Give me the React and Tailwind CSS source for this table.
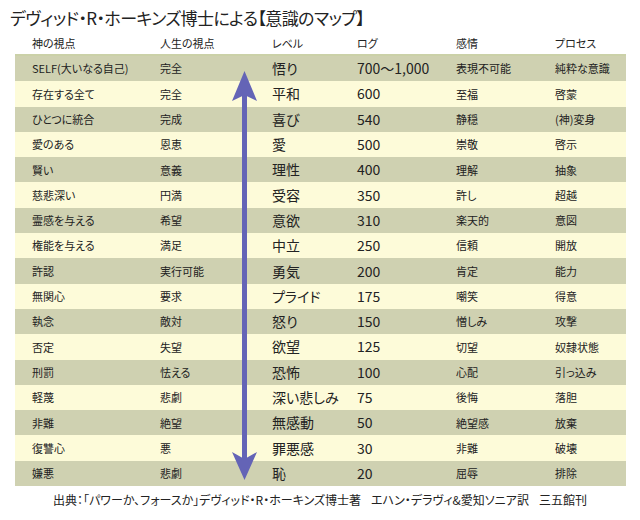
const rows = [
  ["SELF(大いなる自己)", "完全", "悟り", "700〜1,000", "表現不可能", "純粋な意識"],
  ["存在する全て", "完全", "平和", "600", "至福", "啓蒙"],
  ["ひとつに統合", "完成", "喜び", "540", "静穏", "(神)変身"],
  ["愛のある", "恩恵", "愛", "500", "崇敬", "啓示"],
  ["賢い", "意義", "理性", "400", "理解", "抽象"],
  ["慈悲深い", "円満", "受容", "350", "許し", "超越"],
  ["霊感を与える", "希望", "意欲", "310", "楽天的", "意図"],
  ["権能を与える", "満足", "中立", "250", "信頼", "開放"],
  ["許認", "実行可能", "勇気", "200", "肯定", "能力"],
  ["無関心", "要求", "プライド", "175", "嘲笑", "得意"],
  ["執念", "敵対", "怒り", "150", "憎しみ", "攻撃"],
  ["否定", "失望", "欲望", "125", "切望", "奴隷状態"],
  ["刑罰", "怯える", "恐怖", "100", "心配", "引っ込み"],
  ["軽蔑", "悲劇", "深い悲しみ", "75", "後悔", "落胆"],
  ["非難", "絶望", "無感動", "50", "絶望感", "放棄"],
  ["復讐心", "悪", "罪悪感", "30", "非難", "破壊"],
  ["嫌悪", "悲劇", "恥", "20", "屈辱", "排除"],
];

const cols = "grid grid-cols-[128px_112px_85px_99px_99px_1fr] pl-[17px]";

export default function App() {
  return (
    <div
      className="w-[640px] h-[520px] bg-white text-[#222] overflow-hidden [font-feature-settings:'palt']"
      style={{ fontFamily: '"Noto Sans CJK JP", "Noto Sans", sans-serif' }}
    >
      <h1 className="pl-[10px] pt-[6px] text-[17px] leading-[24px] tracking-[-0.6px] whitespace-nowrap">
        デヴィッド・R・ホーキンズ博士による【意識のマップ】
      </h1>

      <div className="relative ml-[15px] w-[611px] mt-[2px]">
        {/* header */}
        <div className={`${cols} h-[24px] items-center text-[11px] border-b-2 border-[#cbd1a8]`}>
          <span>神の視点</span>
          <span>人生の視点</span>
          <span>レベル</span>
          <span>ログ</span>
          <span>感情</span>
          <span>プロセス</span>
        </div>

        {rows.map((r, i) => (
          <div
            key={i}
            className={`${cols} h-[25.3px] items-center ${i % 2 === 0 ? "bg-[#cfd1b1]" : "bg-[#fdfbd9]"}`}
          >
            <span className="text-[11px]">{r[0]}</span>
            <span className="text-[11px]">{r[1]}</span>
            <span className="text-[14px]">{r[2]}</span>
            <span className="text-[14px]">{r[3]}</span>
            <span className="text-[11px]">{r[4]}</span>
            <span className="text-[11px]">{r[5]}</span>
          </div>
        ))}

        {/* up/down arrow */}
        <svg
          className="absolute left-[214px] top-[39px]"
          width="32"
          height="410"
          viewBox="0 0 32 410"
        >
          <rect x="13" y="20" width="5" height="370" fill="#6464b6" />
          <path d="M15.5 0 L28 30 L15.5 24 L3 30 Z" fill="#6464b6" />
          <path d="M15.5 409 L28 381 L15.5 388 L3 381 Z" fill="#6464b6" />
        </svg>
      </div>

      <p className="text-center text-[12px] mt-[4px] leading-[20px] whitespace-nowrap">
        出典：「パワーか、フォースか」デヴィッド・R・ホーキンズ博士著<span className="ml-[10px]">エハン・デラヴィ&amp;愛知ソニア訳</span><span className="ml-[10px]">三五館刊</span>
      </p>
    </div>
  );
}
